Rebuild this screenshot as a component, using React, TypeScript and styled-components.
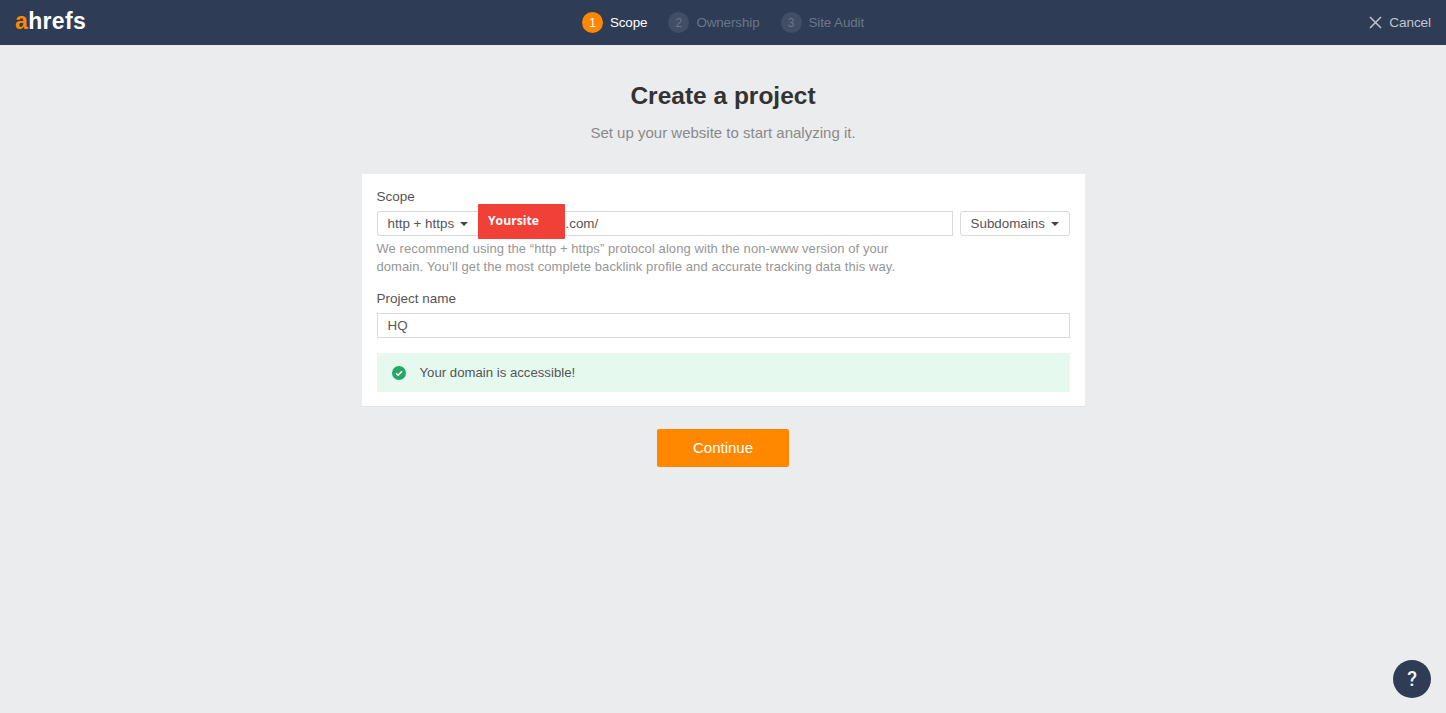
import { FC } from 'react';
import styled, { createGlobalStyle } from 'styled-components';

const GlobalStyle = createGlobalStyle`
    html, body {
        margin: 0;
        padding: 0;
        height: 100%;
        background: #ebecee;
        font-family: 'Liberation Sans', Arial, sans-serif;
        color: #333;
    }
    * { box-sizing: border-box; }
`;

const Page = styled.div`
    position: relative;
    height: 713px;
    overflow: hidden;
`;

const Header = styled.header`
    display: grid;
    grid-template-columns: 1fr auto 1fr;
    align-items: center;
    height: 45px;
    padding: 0 15px;
    background: #2e3c56;
`;

const Logo = styled.div`
    font-size: 23px;
    font-weight: 700;
    letter-spacing: 0.35px;
    color: #fff;
    line-height: 1;
    margin-top: -3px;
    & > span { color: #ff8800; }
`;

const Steps = styled.ol`
    display: flex;
    align-items: center;
    gap: 21px;
    margin: 0;
    padding: 0;
    list-style: none;
`;

const Step = styled.li<{ $active?: boolean }>`
    display: flex;
    align-items: center;
    gap: 7px;
    font-size: 13.4px;
    letter-spacing: -0.1px;
    color: ${(p) => (p.$active ? '#fff' : '#6b768b')};
`;

const StepNumber = styled.span<{ $active?: boolean }>`
    display: flex;
    align-items: center;
    justify-content: center;
    width: 21px;
    height: 21px;
    border-radius: 50%;
    font-size: 12px;
    background: ${(p) => (p.$active ? '#ff8800' : '#414e66')};
    color: ${(p) => (p.$active ? '#fff' : '#6b768b')};
`;

const CancelLink = styled.a`
    justify-self: end;
    display: flex;
    align-items: center;
    gap: 7px;
    font-size: 13.6px;
    letter-spacing: -0.1px;
    color: #c0c5cf;
`;

const Main = styled.main`
    display: flex;
    flex-direction: column;
    align-items: center;
`;

const Title = styled.h1`
    margin: 36px 0 0;
    font-size: 24.5px;
    line-height: 30px;
    font-weight: 700;
    color: #333;
`;

const Subtitle = styled.p`
    margin: 12px 0 0;
    font-size: 15px;
    line-height: 20px;
    color: #8a8a8a;
`;

const Card = styled.section`
    width: 723px;
    height: 233px;
    margin-top: 31px;
    padding: 14px 15px 0;
    background: #fff;
    border-bottom: 1px solid #e2e3e5;
`;

const Label = styled.label`
    display: block;
    font-size: 13.5px;
    line-height: 18px;
    color: #555;
`;

const ScopeRow = styled.div`
    display: flex;
    gap: 7px;
    margin-top: 5px;
`;

const UrlGroup = styled.div`
    display: flex;
    flex: 1;
`;

const SelectButton = styled.div<{ $joined?: boolean }>`
    display: flex;
    align-items: center;
    justify-content: space-between;
    height: 25px;
    padding: 0 10px;
    font-size: 13.4px;
    color: #555;
    background: #fff;
    border: 1px solid #dadada;
    border-radius: ${(p) => (p.$joined ? '3px 0 0 3px' : '3px')};
    ${(p) => p.$joined && 'border-right: 0; width: 101px;'}
    ${(p) => !p.$joined && 'width: 110px;'}
`;

const Caret = styled.span`
    width: 0;
    height: 0;
    border-left: 4px solid transparent;
    border-right: 4px solid transparent;
    border-top: 4px solid #444;
`;

const TextBox = styled.div<{ $indent: number }>`
    flex: 1;
    display: flex;
    align-items: center;
    height: 25px;
    padding-left: ${(p) => p.$indent}px;
    font-size: 13.4px;
    color: #555;
    border: 1px solid #dadada;
`;

const Hint = styled.p`
    margin: 4px 0 0;
    width: 530px;
    font-size: 13px;
    letter-spacing: 0.08px;
    line-height: 18px;
    color: #969696;
`;

const NameLabel = styled(Label)`
    margin-top: 14px;
`;

const NameRow = styled.div`
    display: flex;
    margin-top: 5px;
`;

const SuccessNote = styled.div`
    display: flex;
    align-items: center;
    gap: 14px;
    height: 39px;
    margin-top: 15px;
    padding-left: 15px;
    background: #e6f9ef;
    font-size: 13.2px;
    color: #555;
`;

const ContinueButton = styled.button`
    width: 132px;
    height: 38px;
    margin-top: 22px;
    padding-bottom: 2px;
    border: 0;
    border-radius: 2px;
    background: #ff8800;
    color: #fff;
    font-family: inherit;
    font-size: 15px;
`;

const RedactedSite = styled.div`
    position: absolute;
    left: 478px;
    top: 204px;
    width: 87px;
    height: 35px;
    padding: 9px 0 0 10px;
    background: #f14038;
    border-radius: 1px;
    font-family: 'Open Sans', sans-serif;
    font-size: 12.2px;
    line-height: 15px;
    font-weight: 700;
    color: #fff;
`;

const HelpButton = styled.div`
    position: absolute;
    right: 15px;
    bottom: 15px;
    display: flex;
    align-items: center;
    justify-content: center;
    width: 38px;
    height: 38px;
    border-radius: 50%;
    background: #2e3c56;
    color: #f2f2f2;
    font-family: Roboto, sans-serif;
    font-size: 20px;
    font-weight: 500;
`;

const App: FC = () => (
    <Page>
        <GlobalStyle />
        <Header>
            <Logo>
                <span>a</span>hrefs
            </Logo>
            <Steps>
                <Step $active>
                    <StepNumber $active>1</StepNumber>
                    Scope
                </Step>
                <Step>
                    <StepNumber>2</StepNumber>
                    Ownership
                </Step>
                <Step>
                    <StepNumber>3</StepNumber>
                    Site Audit
                </Step>
            </Steps>
            <CancelLink>
                <svg width="13" height="13" viewBox="0 0 13 13" fill="none" stroke="#c0c5cf" strokeWidth="1.5">
                    <path d="M1 1l11 11M12 1L1 12" />
                </svg>
                Cancel
            </CancelLink>
        </Header>
        <Main>
            <Title>Create a project</Title>
            <Subtitle>Set up your website to start analyzing it.</Subtitle>
            <Card>
                <Label>Scope</Label>
                <ScopeRow>
                    <UrlGroup>
                        <SelectButton $joined>
                            http + https
                            <Caret />
                        </SelectButton>
                        <TextBox $indent={87}>.com/</TextBox>
                    </UrlGroup>
                    <SelectButton>
                        Subdomains
                        <Caret />
                    </SelectButton>
                </ScopeRow>
                <Hint>
                    We recommend using the “http + https” protocol along with the non-www version of your domain. You’ll
                    get the most complete backlink profile and accurate tracking data this way.
                </Hint>
                <NameLabel>Project name</NameLabel>
                <NameRow>
                    <TextBox $indent={10}>HQ</TextBox>
                </NameRow>
                <SuccessNote>
                    <svg width="14" height="14" viewBox="0 0 14 14">
                        <circle cx="7" cy="7" r="7" fill="#27a765" />
                        <path d="M4 7.2l2.1 2L10 5.2" fill="none" stroke="#fff" strokeWidth="1.5" />
                    </svg>
                    Your domain is accessible!
                </SuccessNote>
            </Card>
            <ContinueButton>Continue</ContinueButton>
        </Main>
        <RedactedSite>Yoursite</RedactedSite>
        <HelpButton>?</HelpButton>
    </Page>
);

export default App;
